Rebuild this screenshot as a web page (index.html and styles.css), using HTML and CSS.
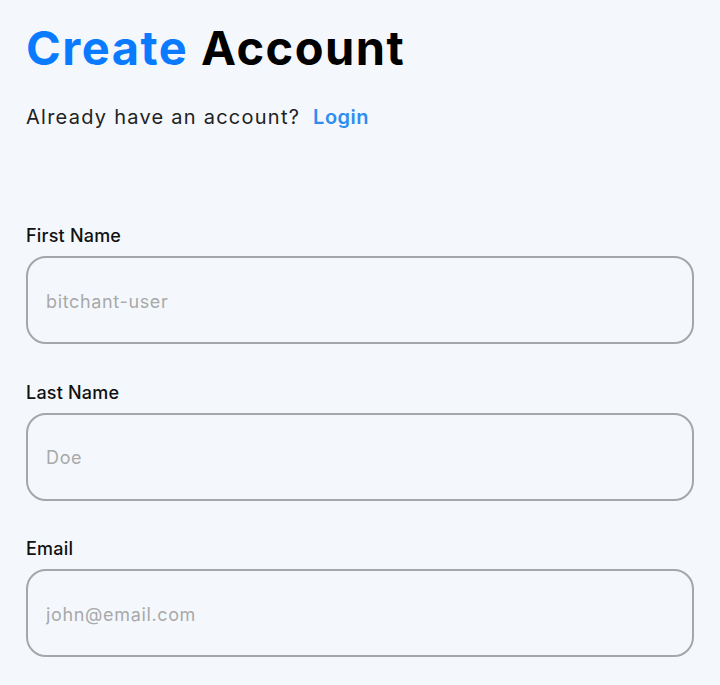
FILE: index.html
```html
<!DOCTYPE html>
<html lang="en">
<head>
<meta charset="utf-8">
<title>Create Account</title>
<link rel="stylesheet" href="styles.css">
</head>
<body>
<main class="page">
  <h1 class="title"><span class="accent">Create</span> Account</h1>
  <p class="subtitle">Already have an account? <a class="login" href="#">Login</a></p>
  <form class="form">
    <div class="field">
      <label class="label" for="first">First Name</label>
      <input class="input" id="first" type="text" placeholder="bitchant-user">
    </div>
    <div class="field">
      <label class="label" for="last">Last Name</label>
      <input class="input" id="last" type="text" placeholder="Doe">
    </div>
    <div class="field">
      <label class="label" for="email">Email</label>
      <input class="input" id="email" type="email" placeholder="john@email.com">
    </div>
  </form>
</main>
</body>
</html>
```
FILE: styles.css
```css
html, body {
  margin: 0;
  padding: 0;
  background: #f4f8fd;
}
body {
  font-family: Inter, "Open Sans", sans-serif;
  color: #111;
}
.page {
  padding: 18px 26px 0 26px;
}
.title {
  margin: 0;
  font-size: 47px;
  font-weight: 700;
  line-height: 60px;
  color: #000;
  letter-spacing: 1.5px;
}
.accent {
  color: #0a7bff;
}
.subtitle {
  margin: 24px 0 0 0;
  font-size: 20px;
  line-height: 30px;
  color: #222;
  letter-spacing: 1.25px;
}
.login {
  color: #2e8ef0;
  font-weight: 600;
  text-decoration: none;
  margin-left: 6px;
  letter-spacing: 0.5px;
}
.form {
  margin-top: 92px;
  display: flex;
  flex-direction: column;
  gap: 36.5px;
}
.field {
  display: flex;
  flex-direction: column;
  gap: 8px;
}
.label {
  font-size: 18px;
  font-weight: 500;
  line-height: 24px;
  color: #111;
  letter-spacing: 0.2px;
}
.input {
  box-sizing: border-box;
  height: 88px;
  width: 100%;
  border: 2px solid #a3a6ab;
  border-radius: 20px;
  background: transparent;
  padding: 2px 18px 0 18px;
  font-family: inherit;
  font-size: 18px;
  color: #111;
  letter-spacing: 0.65px;
  outline: none;
}
.input::placeholder {
  color: #a9a9a9;
}
```
